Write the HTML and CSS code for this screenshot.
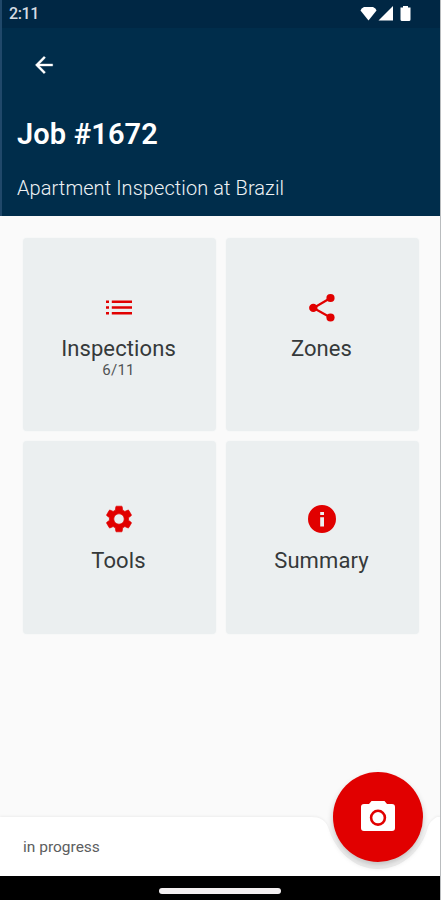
FILE: index.html
```html
<!DOCTYPE html>
<html lang="en">
<head>
<meta charset="utf-8">
<title>Job #1672</title>
<link rel="stylesheet" href="styles.css">
</head>
<body>
<div class="screen">
  <header class="header">
    <div class="status">
      <span class="time">2:11</span>
      <svg class="status-icons" width="52" height="18" viewBox="0 0 52 18" fill="#fff">
        <path d="M.5 7.500Q1 5.200 4 4H13Q16 5.200 16.500 7.500L8.500 17.500Z"/>
        <path d="M33 3V17.500H18.500Z"/>
        <path d="M43 3H48V4.500H50.500V16.500Q50.500 18 49 18H42Q40.500 18 40.500 16.500V4.500H43Z"/>
      </svg>
    </div>
    <svg class="back" width="26" height="26" viewBox="0 0 24 24" fill="#fff" stroke="#fff" stroke-width=".3"><path d="M20 11H7.830l5.590-5.590L12 4l-8 8 8 8 1.410-1.410L7.830 13H20v-2z"/></svg>
    <h1 class="title">Job #1672</h1>
    <p class="subtitle">Apartment Inspection at Brazil</p>
  </header>
  <main class="grid">
    <section class="card">
      <svg class="icon" viewBox="0 0 32 32"><path d="M3 8.500h3v2.600H3zM3 14.200h3v2.600H3zM3 20h3v2.600H3zM8.800 8.500H29v2.600H8.800zM8.800 14.200H29v2.600H8.800zM8.800 20H29v2.600H8.800z"/></svg>
      <h2 class="label">Inspections</h2>
      <p class="count">6/11</p>
    </section>
    <section class="card">
      <svg class="icon" viewBox="0 0 32 32"><path d="M24.500 6L7.500 16L24.500 25.500" fill="none" stroke="#e10000" stroke-width="2.200"/><circle cx="24.500" cy="6" r="4.100"/><circle cx="7.300" cy="15.900" r="4.200"/><circle cx="24.500" cy="25.500" r="4.100"/></svg>
      <h2 class="label">Zones</h2>
    </section>
    <section class="card lower">
      <svg class="icon" viewBox="0 0 24 24"><path d="M19.140 12.940c.04-.3.060-.61.060-.94 0-.32-.02-.64-.07-.94l2.030-1.580c.18-.14.230-.41.120-.61l-1.920-3.320c-.12-.22-.37-.29-.59-.22l-2.390.96c-.5-.38-1.030-.7-1.620-.94l-.36-2.540c-.04-.24-.24-.41-.48-.41h-3.840c-.24 0-.43.170-.47.410l-.36 2.540c-.59.240-1.130.57-1.620.94l-2.390-.96c-.22-.08-.47 0-.59.220L2.740 8.870c-.12.210-.08.470.12.610l2.030 1.580c-.05.300-.09.630-.09.940s.02.640.07.940l-2.030 1.580c-.18.140-.23.410-.12.610l1.920 3.320c.12.220.37.290.59.220l2.390-.96c.5.380 1.030.7 1.620.94l.36 2.540c.05.240.24.410.48.410h3.840c.24 0 .44-.17.470-.41l.36-2.540c.59-.24 1.130-.56 1.620-.94l2.390.96c.22.080.47 0 .59-.22l1.920-3.320c.12-.22.070-.47-.12-.61l-2.010-1.580zM12 15.900c-2.150 0-3.900-1.750-3.900-3.900s1.750-3.900 3.900-3.900 3.900 1.750 3.900 3.900-1.750 3.900-3.900 3.900z" stroke="#e10000" stroke-width=".5"/></svg>
      <h2 class="label">Tools</h2>
    </section>
    <section class="card lower">
      <svg class="icon" viewBox="0 0 32 32"><path fill-rule="evenodd" d="M16 2A14 14 0 1 0 16 30A14 14 0 1 0 16 2ZM14.200 9H18V12H14.200ZM14.200 14.300H18V23.500H14.200Z"/></svg>
      <h2 class="label">Summary</h2>
    </section>
  </main>
  <footer class="bottom">
    <svg class="bar-shape" width="441" height="60" viewBox="0 0 441 60"><path d="M0 1H311C320 1 325 4 328 11C335 34 353 53 378 53S422 34 428 11Q430 5 437 1H441V60H0Z"/></svg>
    <span class="state">in progress</span>
    <button class="fab" aria-label="Camera">
      <svg width="40" height="36" viewBox="0 0 40 36" fill="#fff"><path fill-rule="evenodd" d="M13.500 3H26.500L29 6H34Q37 6 37 9V30Q37 33 34 33H6Q3 33 3 30V9Q3 6 6 6H11ZM20 11.500A8.200 8.200 0 1 0 20 27.900A8.200 8.200 0 1 0 20 11.500Z"/><circle cx="20" cy="19.700" r="5.600"/></svg>
    </button>
  </footer>
  <div class="nav"><span class="pill"></span></div>
</div>
</body>
</html>
```
FILE: styles.css
```css
* { box-sizing: border-box; margin: 0; padding: 0; }
body { font-family: Roboto, "Liberation Sans", sans-serif; background: #fafafa; }
.screen {
  width: 441px;
  height: 900px;
  display: flex;
  flex-direction: column;
  overflow: hidden;
  background: #fafafa;
  border-right: 1px solid #b9bcbe;
}
.header {
  height: 216px;
  flex: none;
  color: #fff;
  background: #002d4b;
  border-left: 2px solid #20486a;
}
.status {
  height: 28px;
  padding: 0 28px 0 7px;
  display: flex;
  align-items: center;
  justify-content: space-between;
  background: #002744;
}
.time { font-size: 16px; font-weight: 500; line-height: 28px; color: #d5dce2; letter-spacing: -.4px; }
.status-icons { margin-top: -4px; }
.back { display: block; margin: 24px 0 0 29px; }
.title { margin: 38px 0 0 15px; font-size: 29px; line-height: 36px; font-weight: 600; letter-spacing: .15px; white-space: nowrap; }
.subtitle { margin: 24px 0 0 15px; font-size: 20px; line-height: 24px; font-weight: 300; letter-spacing: .08px; color: #eef2f5; white-space: nowrap; }
.grid {
  flex: 1;
  padding: 22px 0 0 23px;
  display: grid;
  grid-template-columns: 193px 193px;
  grid-template-rows: 193px 193px;
  gap: 10px;
}
.card {
  display: flex;
  flex-direction: column;
  align-items: center;
  padding: 54px 2px 0 0;
  border-radius: 4px;
  background: #ebeff0;
  box-shadow: 0 0 2px #eef2f3;
}
.lower { padding-top: 62px; }
.icon { width: 32px; height: 32px; fill: #e10000; }
.label { margin-top: 13px; font-size: 22px; line-height: 24px; font-weight: 400; letter-spacing: .1px; color: #35393a; }
.lower .label { margin-top: 14px; }
.count { margin-top: 1px; font-size: 15px; line-height: 16px; color: #505355; letter-spacing: .3px; }
.bottom { position: relative; height: 60px; flex: none; padding: 21px 0 0 23px; }
.bar-shape { position: absolute; left: 0; top: 0; fill: #fff; filter: drop-shadow(0 -1px 1px rgba(0,0,0,.05)); }
.state { position: relative; font-size: 15.500px; line-height: 20px; color: #5c5e60; }
.fab {
  position: absolute;
  left: 333px;
  top: -44px;
  width: 90px;
  height: 90px;
  border: 0;
  border-radius: 50%;
  display: flex;
  align-items: center;
  justify-content: center;
  background: #e10000;
  box-shadow: 0 4px 6px rgba(0,0,0,.22);
}
.fab svg { margin-top: -3px; }
.nav {
  height: 24px;
  flex: none;
  display: flex;
  justify-content: center;
  padding-top: 12px;
  background: #000;
}
.pill { width: 122px; height: 6px; border-radius: 3px; background: #f3f0f1; }
```
